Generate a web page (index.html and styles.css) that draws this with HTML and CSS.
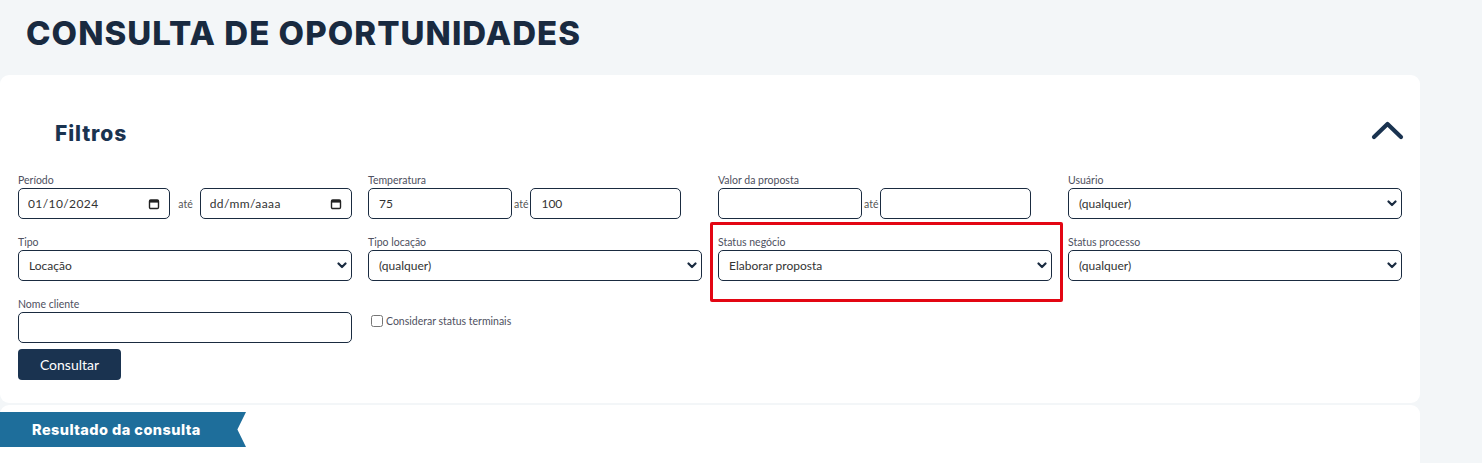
FILE: index.html
```html
<!DOCTYPE html>
<html lang="pt-BR">
<head>
  <meta charset="UTF-8">
  <meta name="viewport" content="width=device-width, initial-scale=1.0">
  <title>Consulta de Oportunidades</title>
  <link rel="stylesheet" href="styles.css">
</head>
<body>
  <h1 class="page-title">CONSULTA DE OPORTUNIDADES</h1>

  <section class="card filters">
    <div class="filters-head">
      <h2>Filtros</h2>
      <button class="toggle" type="button" aria-label="Recolher filtros">
        <svg width="33" height="20" viewBox="0 0 33 20"><path d="M3 17 L16.5 4 L30 17" fill="none" stroke="#1a3350" stroke-width="4.2" stroke-linecap="round" stroke-linejoin="round"/></svg>
      </button>
    </div>

    <form class="filters-grid">
      <!-- linha 1 -->
      <div class="field">
        <label>Período</label>
        <div class="range">
          <div class="date-box">
            <input type="text" value="01/10/2024">
            <svg class="cal" width="12" height="12" viewBox="0 0 12 12"><rect x="1.5" y="2" width="9" height="8.5" rx="1.2" fill="none" stroke="#222" stroke-width="1.4"/><rect x="1.5" y="2" width="9" height="2.6" fill="#222"/></svg>
          </div>
          <span class="ate">até</span>
          <div class="date-box">
            <input type="text" placeholder="dd/mm/aaaa">
            <svg class="cal" width="12" height="12" viewBox="0 0 12 12"><rect x="1.5" y="2" width="9" height="8.5" rx="1.2" fill="none" stroke="#222" stroke-width="1.4"/><rect x="1.5" y="2" width="9" height="2.6" fill="#222"/></svg>
          </div>
        </div>
      </div>
      <div class="field">
        <label>Temperatura</label>
        <div class="range short">
          <input class="box" type="text" value="75">
          <span class="ate tight">até</span>
          <input class="box" type="text" value="100">
        </div>
      </div>
      <div class="field">
        <label>Valor da proposta</label>
        <div class="range short">
          <input class="box" type="text">
          <span class="ate tight">até</span>
          <input class="box" type="text">
        </div>
      </div>
      <div class="field">
        <label>Usuário</label>
        <div class="select-wrap">
          <select class="box"><option>(qualquer)</option></select>
          <svg class="chev" width="10" height="7" viewBox="0 0 10 7"><path d="M1.5 1.5 L5 5 L8.5 1.5" fill="none" stroke="#1a2b40" stroke-width="2.2" stroke-linecap="round" stroke-linejoin="round"/></svg>
        </div>
      </div>

      <!-- linha 2 -->
      <div class="field">
        <label>Tipo</label>
        <div class="select-wrap">
          <select class="box"><option>Locação</option></select>
          <svg class="chev" width="10" height="7" viewBox="0 0 10 7"><path d="M1.5 1.5 L5 5 L8.5 1.5" fill="none" stroke="#1a2b40" stroke-width="2.2" stroke-linecap="round" stroke-linejoin="round"/></svg>
        </div>
      </div>
      <div class="field">
        <label>Tipo locação</label>
        <div class="select-wrap">
          <select class="box"><option>(qualquer)</option></select>
          <svg class="chev" width="10" height="7" viewBox="0 0 10 7"><path d="M1.5 1.5 L5 5 L8.5 1.5" fill="none" stroke="#1a2b40" stroke-width="2.2" stroke-linecap="round" stroke-linejoin="round"/></svg>
        </div>
      </div>
      <div class="field highlighted">
        <label>Status negócio</label>
        <div class="select-wrap">
          <select class="box"><option>Elaborar proposta</option></select>
          <svg class="chev" width="10" height="7" viewBox="0 0 10 7"><path d="M1.5 1.5 L5 5 L8.5 1.5" fill="none" stroke="#1a2b40" stroke-width="2.2" stroke-linecap="round" stroke-linejoin="round"/></svg>
        </div>
        <div class="mark"></div>
      </div>
      <div class="field">
        <label>Status processo</label>
        <div class="select-wrap">
          <select class="box"><option>(qualquer)</option></select>
          <svg class="chev" width="10" height="7" viewBox="0 0 10 7"><path d="M1.5 1.5 L5 5 L8.5 1.5" fill="none" stroke="#1a2b40" stroke-width="2.2" stroke-linecap="round" stroke-linejoin="round"/></svg>
        </div>
      </div>

      <!-- linha 3 -->
      <div class="field">
        <label>Nome cliente</label>
        <input class="box" type="text">
      </div>
      <div class="field">
        <label class="check"><input type="checkbox"> Considerar status terminais</label>
      </div>
    </form>

    <button class="btn-consultar" type="button">Consultar</button>
  </section>

  <section class="card results">
    <div class="ribbon">Resultado da consulta</div>
  </section>
</body>
</html>
```

FILE: styles.css
```css
body {
  margin: 0;
  background-color: #f3f6f8;
  font-family: "Lato", "Noto Sans", sans-serif;
  color: #333;
  overflow: hidden;
}
.page-title {
  margin: 0;
  padding: 13px 0 0 26px;
  height: 62px;
  box-sizing: border-box;
  font-family: "Inter", sans-serif;
  font-weight: 800;
  font-size: 33px;
  line-height: 40px;
  letter-spacing: 1.05px;
  color: #192a40;
}
.card {
  width: 1420px;
  background: #fff;
  border-radius: 9px;
}
.filters {
  margin-top: 13px;
  padding: 43px 18px 23px;
  box-sizing: border-box;
}
.filters-head {
  display: flex;
  justify-content: space-between;
  align-items: center;
  height: 30px;
  margin-bottom: 25px;
}
.filters-head h2 {
  margin: 0 0 0 37px;
  font-family: "Inter", sans-serif;
  font-weight: 800;
  font-size: 21px;
  letter-spacing: 0.9px;
  color: #1a3350;
}
.toggle {
  border: none;
  background: none;
  padding: 0;
  margin-right: -2px;
  margin-top: -4px;
  cursor: pointer;
}
.filters-grid {
  display: grid;
  grid-template-columns: repeat(4, 334px);
  column-gap: 16px;
  row-gap: 16px;
}
.field {
  position: relative;
}
.field label {
  display: block;
  height: 14px;
  margin-bottom: 1px;
  font-size: 10.5px;
  line-height: 14px;
  color: #4e5060;
}
.box {
  display: block;
  width: 100%;
  height: 31px;
  box-sizing: border-box;
  padding: 0 10px;
  border: 1px solid #1a2b40;
  border-radius: 5px;
  background: #fff;
  font-family: inherit;
  font-size: 12px;
  color: #333;
  outline: none;
}
.range {
  display: flex;
  align-items: center;
}
.range.short {
  width: 313px;
}
.range .box {
  flex: 1;
  min-width: 0;
}
.range.short .box:first-child {
  flex: 0 0 144px;
}
.ate {
  font-size: 10.5px;
  color: #555;
  padding: 0 7px 0 8px;
}
.ate.tight {
  padding: 0 2px;
}
.date-box {
  flex: 1;
  min-width: 0;
  display: flex;
  align-items: center;
  height: 31px;
  box-sizing: border-box;
  border: 1px solid #1a2b40;
  border-radius: 5px;
  padding: 0 9px 0 9px;
}
.date-box input {
  flex: 1;
  min-width: 0;
  width: 10px;
  border: none;
  outline: none;
  padding: 0;
  font-family: inherit;
  font-size: 12px;
  letter-spacing: 0.4px;
  color: #333;
}
.date-box input::placeholder {
  color: #333;
}
.select-wrap {
  position: relative;
}
.select-wrap select {
  appearance: none;
  -webkit-appearance: none;
}
.chev {
  position: absolute;
  right: 5px;
  top: 12px;
  pointer-events: none;
}
.highlighted .mark {
  position: absolute;
  left: -8px;
  right: -11px;
  top: -13px;
  bottom: -21px;
  border: 3px solid #e30613;
  border-radius: 2px;
  pointer-events: none;
}
.field label.check {
  display: flex;
  align-items: center;
  height: auto;
  margin-top: 17px;
  font-size: 10.5px;
  color: #4e5060;
}
.check input {
  margin: 0 3px 0 3px;
  width: 12px;
  height: 12px;
}
.btn-consultar {
  display: block;
  margin-top: 6px;
  width: 103px;
  height: 31px;
  border: none;
  border-radius: 4px;
  background: #1a3350;
  color: #fff;
  font-family: inherit;
  font-size: 14px;
  cursor: pointer;
}
.results {
  margin-top: 2px;
  height: 80px;
  padding-top: 7px;
  box-sizing: border-box;
}
.ribbon {
  width: 246px;
  height: 35px;
  box-sizing: border-box;
  padding-left: 32px;
  background: #1e6e9b;
  color: #fff;
  font-family: "Inter", sans-serif;
  font-weight: 800;
  font-size: 14.5px;
  letter-spacing: 0.45px;
  line-height: 35px;
  clip-path: polygon(0 0, 100% 0, 96.5% 50%, 100% 100%, 0 100%);
}
```
